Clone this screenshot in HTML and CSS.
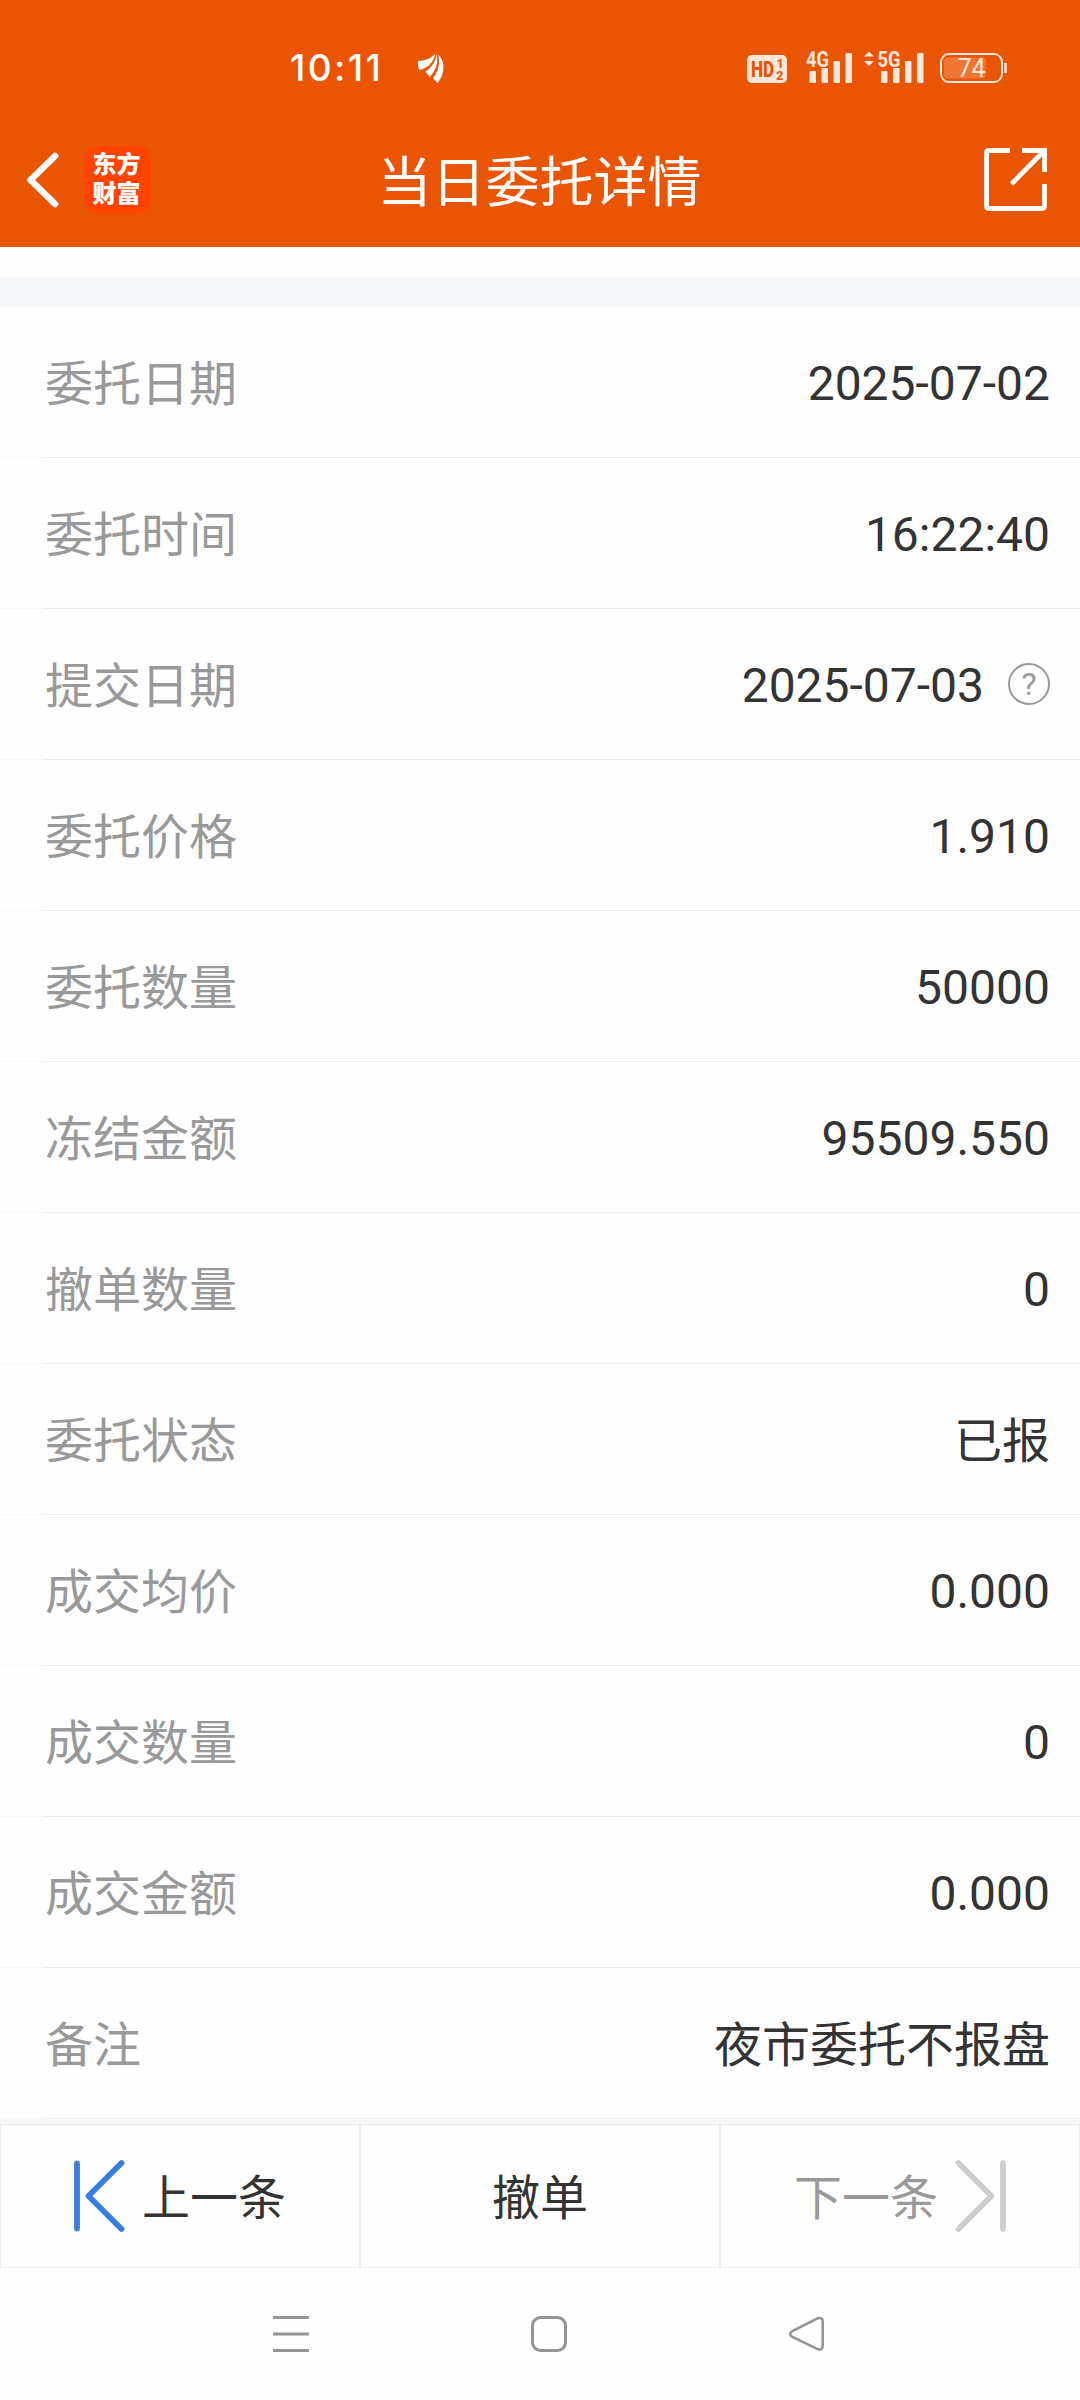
FILE: index.html
```html
<!DOCTYPE html>
<html lang="zh-CN">
<head>
  <meta charset="UTF-8">
  <meta name="viewport" content="width=device-width, initial-scale=1.0">
  <title>当日委托详情</title>
  <link rel="stylesheet" href="styles.css">
</head>
<body>
  <header class="header">
    <!-- Status bar -->
    <div class="status-bar">
      <span class="time">10:11</span>
      <svg class="leaf" width="28" height="32" viewBox="0 0 28 32" fill="#fff">
        <path d="M18.500 1.500C13 7 8 8.500 1 9C0.500 12 1 15.500 2.500 18C10 16 16 12 18.500 1.500Z"/>
        <path d="M19.800 2C18.500 10 14.500 15.500 8.500 19.500L12.500 25C18.500 19 21.500 12 19.800 2Z"/>
        <path d="M21.500 2.500C23 12 21.500 19 16 26L20.500 31C27.500 23 29 10.500 21.500 2.500Z"/>
      </svg>
      <div class="status-icons">
        <svg width="40" height="36" viewBox="0 0 40 36">
          <rect x="0" y="6" width="40" height="28" rx="5" fill="#fde6da"/>
          <text class="hd" x="4" y="28" textLength="23" lengthAdjust="spacingAndGlyphs">HD</text>
          <text class="hd-num" x="29.500" y="18.500">1</text>
          <text class="hd-num" x="29" y="31">2</text>
        </svg>
        <svg class="signal" width="47" height="36" viewBox="0 0 47 36" fill="#fde6da">
          <text class="net" x="0" y="17.500" textLength="23" lengthAdjust="spacingAndGlyphs">4G</text>
          <rect x="3.500" y="22" width="6.500" height="12" rx="1"/>
          <rect x="15.500" y="19" width="6.500" height="15" rx="1"/>
          <rect x="27.500" y="12" width="6.500" height="22" rx="1"/>
          <rect x="39.500" y="4" width="6.500" height="30" rx="1"/>
        </svg>
        <svg class="signal-5g" width="60" height="36" viewBox="0 0 60 36" fill="#fde6da">
          <path d="M0 7.500L5 2.500L10 7.500ZM0 12L5 17L10 12Z"/>
          <text class="net" x="13.500" y="17.500" textLength="23" lengthAdjust="spacingAndGlyphs">5G</text>
          <rect x="17" y="22" width="6.500" height="12" rx="1"/>
          <rect x="29" y="19" width="6.500" height="15" rx="1"/>
          <rect x="41" y="12" width="6.500" height="22" rx="1"/>
          <rect x="53" y="4" width="6.500" height="30" rx="1"/>
        </svg>
        <svg class="battery" width="68" height="36" viewBox="0 0 68 36">
          <rect x="1" y="5" width="61" height="28" rx="8" fill="none" stroke="#fde6da" stroke-width="2"/>
          <rect x="4" y="8.500" width="42" height="21" rx="4" fill="#ee7633"/>
          <path d="M65.500 14V24" stroke="#fde6da" stroke-width="2.500"/>
          <text class="percent" x="17.500" y="28" textLength="28">74</text>
        </svg>
      </div>
    </div>
    <!-- Title bar -->
    <div class="title-bar">
      <div class="title-left">
        <svg width="34" height="58" viewBox="0 0 34 58" fill="none" stroke="#fff" stroke-width="6.600" stroke-linecap="round" stroke-linejoin="round">
          <path d="M30 5L5.500 29L30 53"/>
        </svg>
        <div class="logo">东方<br>财富</div>
      </div>
      <h1>当日委托详情</h1>
      <svg class="share" width="64" height="64" viewBox="0 0 64 64" fill="none" stroke="#fff" stroke-width="4.800">
        <path d="M26 2.500H5Q2.500 2.500 2.500 5V58Q2.500 60.500 5 60.500H58Q60.500 60.500 60.500 58V36"/>
        <path d="M38 2.500H60.500V24M60 3L27.500 36"/>
      </svg>
    </div>
  </header>

  <main class="detail">
    <div class="row"><span class="label">委托日期</span><span class="value">2025-07-02</span></div>
    <div class="row"><span class="label">委托时间</span><span class="value">16:22:40</span></div>
    <div class="row">
      <span class="label">提交日期</span>
      <span class="value">2025-07-03</span>
      <span class="help">?</span>
    </div>
    <div class="row"><span class="label">委托价格</span><span class="value">1.910</span></div>
    <div class="row"><span class="label">委托数量</span><span class="value">50000</span></div>
    <div class="row"><span class="label">冻结金额</span><span class="value">95509.550</span></div>
    <div class="row"><span class="label">撤单数量</span><span class="value">0</span></div>
    <div class="row"><span class="label">委托状态</span><span class="value text">已报</span></div>
    <div class="row"><span class="label">成交均价</span><span class="value">0.000</span></div>
    <div class="row"><span class="label">成交数量</span><span class="value">0</span></div>
    <div class="row"><span class="label">成交金额</span><span class="value">0.000</span></div>
    <div class="row"><span class="label">备注</span><span class="value text">夜市委托不报盘</span></div>
  </main>

  <!-- Bottom actions -->
  <div class="actions">
    <button type="button">
      <svg width="50" height="72" viewBox="0 0 50 72" fill="none" stroke="#3880e0" stroke-width="5.800" stroke-linecap="round" stroke-linejoin="round">
        <path d="M3 3.500V68.500M47.500 3L14.500 36L47.500 69"/>
      </svg>
      <span>上一条</span>
    </button>
    <button type="button"><span>撤单</span></button>
    <button type="button" class="disabled">
      <span>下一条</span>
      <svg width="50" height="72" viewBox="0 0 50 72" fill="none" stroke="#ccc" stroke-width="5.800" stroke-linecap="round" stroke-linejoin="round">
        <path d="M47 3.500V68.500M2.500 3L35.500 36L2.500 69"/>
      </svg>
    </button>
  </div>

  <!-- System navigation -->
  <nav class="nav-bar">
    <svg width="36" height="36" viewBox="0 0 36 36" stroke="#949494" stroke-width="3">
      <path d="M0 1.500H36M0 18H36M0 34.500H36"/>
    </svg>
    <svg width="36" height="36" viewBox="0 0 36 36" fill="none" stroke="#949494" stroke-width="3">
      <rect x="1.500" y="1.500" width="33" height="33" rx="8"/>
    </svg>
    <svg width="36" height="36" viewBox="0 0 36 36" fill="none" stroke="#949494" stroke-width="2.600">
      <path d="M29 2.200L3 15.300Q-0.500 18 3 20.700L29 33.300Q33.500 34.500 33.700 30V5.500Q33.500 1 29 2.200Z"/>
    </svg>
  </nav>
</body>
</html>
```

FILE: styles.css
```css
/* General Styling */
* {
  box-sizing: border-box;
}
body {
  margin: 0;
  background: #fefefe;
  color: #333;
  font-family: Roboto, "Noto Sans CJK SC", sans-serif;
  font-size: 48px;
}
svg {
  display: block;
  flex: none;
  overflow: visible;
}

/* Header */
.header {
  height: 247px;
  background: #ea5504;
  color: #fff;
}
.status-bar {
  display: flex;
  align-items: center;
  height: 112px;
  padding: 24px 72px 0 290px;
}
.time {
  width: 127px;
  font-family: Inter, sans-serif;
  font-size: 37px;
  font-weight: 500;
  line-height: 40px;
  letter-spacing: 2.4px;
}
.status-icons {
  display: flex;
  align-items: center;
  margin-left: auto;
  margin-top: -2px;
}
.signal {
  margin-left: 19px;
}
.signal-5g {
  margin-left: 11px;
}
.battery {
  margin-left: 16px;
}
.hd {
  font-size: 22px;
  font-weight: 900;
  fill: #ea5504;
}
.hd-num {
  font-size: 13px;
  font-weight: 700;
  line-height: 1;
  fill: #ea5504;
}
.net {
  font-size: 22px;
  font-weight: 700;
}
.percent {
  font-size: 25px;
  fill: #fde6da;
}
.title-bar {
  display: grid;
  grid-template-columns: 1fr auto 1fr;
  align-items: center;
  height: 135px;
  padding: 0 32px 0 25px;
}
.title-left {
  display: flex;
  align-items: center;
  gap: 25px;
}
.logo {
  width: 67px;
  height: 67px;
  padding: 5px 2px 0 0;
  border-radius: 14px;
  background: #ff4400;
  font-size: 24px;
  font-weight: 900;
  line-height: 29px;
  text-align: center;
}
h1 {
  margin: 0;
  padding: 8px 0 0 6px;
  font-size: 54px;
  font-weight: 400;
  line-height: 80px;
}
.share {
  justify-self: end;
}

/* Detail rows */
.detail {
  margin-top: 30px;
  padding-top: 30px;
  background: #f6f8fa;
}
.row {
  display: flex;
  align-items: center;
  height: 151px;
  padding: 2px 30px 0 45px;
  background: linear-gradient(90deg, #f8f8f8 45px, #ececec 45px) bottom / 100% 1px no-repeat #fefefe;
  line-height: 70px;
}
.label {
  padding-top: 2px;
  color: #999;
}
.value {
  margin-left: auto;
}
.value.text {
  padding-top: 2px;
}
.help {
  width: 42px;
  height: 42px;
  margin: -3px 0 0 24px;
  border: 2px solid #999;
  border-radius: 50%;
  color: #999;
  font-size: 32px;
  line-height: 38px;
  text-align: center;
}

/* Bottom actions */
.actions {
  display: grid;
  grid-template-columns: repeat(3, 1fr);
  padding-top: 5px;
  background: #f6f8fa;
}
.actions button {
  display: flex;
  align-items: center;
  justify-content: center;
  gap: 18px;
  height: 144px;
  padding: 0;
  border: 1px solid #ececec;
  background: #fefefe;
  color: #333;
  font: inherit;
}
.actions span {
  padding-bottom: 4px;
}
.actions .disabled {
  color: #999;
}

/* System navigation */
.nav-bar {
  display: flex;
  align-items: center;
  gap: 222px;
  height: 132px;
  padding-left: 273px;
}
```
